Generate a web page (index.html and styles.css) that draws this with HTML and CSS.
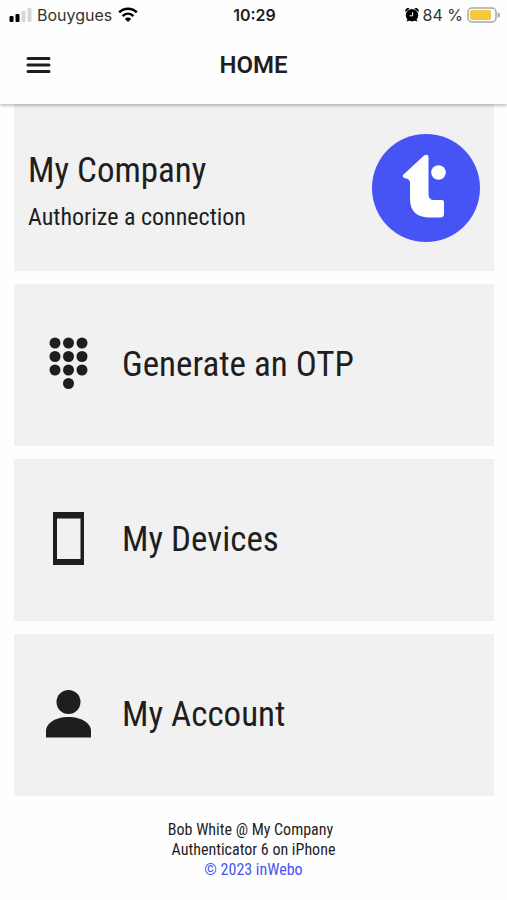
FILE: index.html
```html
<!doctype html>
<html lang="en">
  <head>
    <meta charset="UTF-8" />
    <meta name="viewport" content="width=device-width, initial-scale=1" />
    <title>Home</title>
    <link rel="stylesheet" href="styles.css">
  </head>
  <body>
    <header class="header">
      <div class="status-bar">
        <div class="status-left">
          <svg width="24" height="16" viewBox="0 0 24 16" aria-hidden="true">
            <rect x="0.500" y="9" width="4" height="6" rx="1" />
            <rect x="6.500" y="7" width="4" height="8" rx="1" />
            <rect class="signal-off" x="12.500" y="4" width="4" height="11" rx="1" />
            <rect class="signal-off" x="18.500" y="1" width="4" height="14" rx="1" />
          </svg>
          <span class="carrier">Bouygues</span>
          <svg width="20" height="16" viewBox="0 0 20 16" aria-hidden="true">
            <path class="wifi-arc" d="M1.2 5.4C6.2.6 13.8.6 18.8 5.4M4.6 9C7.8 6 12.2 6 15.4 9" />
            <path d="M10 15 6.8 11.7Q10 9.3 13.2 11.7Z" />
          </svg>
        </div>
        <span class="clock">10:29</span>
        <div class="status-right">
          <svg width="14" height="14" viewBox="0 0 14 14" aria-hidden="true">
            <circle cx="7" cy="7.2" r="6.2" />
            <path d="M.6 4A2.8 2.8 0 0 1 4.6.4ZM13.4 4A2.8 2.8 0 0 0 9.4.4ZM1.4 13.6 3 10.5l2 2ZM12.6 13.6 11 10.5l-2 2Z" />
            <path class="alarm-hands" d="M7.6 4.2v3.6H4.6" />
          </svg>
          <span>84 %</span>
          <svg width="33" height="16" viewBox="0 0 33 16" aria-hidden="true">
            <rect class="battery-case" x="1" y="1" width="28" height="14" rx="4" />
            <rect class="battery-level" x="3" y="3" width="21" height="10" rx="2" />
            <path class="battery-tip" d="M30.5 5.5a2.5 2.5 0 0 1 0 5Z" />
          </svg>
        </div>
      </div>
      <nav class="nav-bar">
        <button type="button" class="menu-button" aria-label="Menu">
          <svg width="26" height="18" viewBox="0 0 26 18" aria-hidden="true">
            <path d="M3 2.500h21M3 9h21M3 15.500h21" />
          </svg>
        </button>
        <h1>HOME</h1>
      </nav>
    </header>

    <main class="cards">
      <button type="button" class="card card-company">
        <span class="company-text">
          <span class="card-title">My Company</span>
          <span class="card-subtitle">Authorize a connection</span>
        </span>
        <svg width="108" height="108" viewBox="0 0 108 108" aria-hidden="true">
          <circle class="logo-disc" cx="54" cy="54" r="54" />
          <path class="logo-mark" d="M52 21.5Q56.500 19 56.500 24V60Q56.500 66 62 66H70Q72 66 72 68V80Q72 83 69 83.500H58Q38 83.500 38 65V49Q38 45 34 44.500Q30 44 31 41Z" />
          <circle class="logo-mark" cx="66.500" cy="38.500" r="7.300" />
        </svg>
      </button>

      <button type="button" class="card">
        <svg class="card-icon" width="54" height="54" viewBox="0 0 54 54" aria-hidden="true">
          <circle cx="14" cy="7" r="5.500" />
          <circle cx="27.500" cy="7" r="5.500" />
          <circle cx="41" cy="7" r="5.500" />
          <circle cx="14" cy="20.500" r="5.500" />
          <circle cx="27.500" cy="20.500" r="5.500" />
          <circle cx="41" cy="20.500" r="5.500" />
          <circle cx="14" cy="34" r="5.500" />
          <circle cx="27.500" cy="34" r="5.500" />
          <circle cx="41" cy="34" r="5.500" />
          <circle cx="27.500" cy="47.500" r="5.500" />
        </svg>
        <span class="card-title">Generate an OTP</span>
      </button>

      <button type="button" class="card">
        <svg class="card-icon" width="54" height="54" viewBox="0 0 54 54" aria-hidden="true">
          <path fill-rule="evenodd" d="M12 1H43V54H12ZM16 7.500V48H39.500V7.500Z" />
        </svg>
        <span class="card-title">My Devices</span>
      </button>

      <button type="button" class="card">
        <svg class="card-icon" width="54" height="54" viewBox="0 0 54 54" aria-hidden="true">
          <circle cx="27.500" cy="16" r="12" />
          <path d="M5 51.500V45C5 37 15 31 27.500 31S50 37 50 45V51.500Z" />
        </svg>
        <span class="card-title">My Account</span>
      </button>
    </main>

    <footer class="footer">
      <p class="footer-user">Bob White @ My Company</p>
      <p>Authenticator 6 on iPhone</p>
      <p><a href="#">© 2023 inWebo</a></p>
    </footer>
  </body>
</html>
```

FILE: styles.css
```css
* {
  box-sizing: border-box;
}
body {
  margin: 0;
  background: #fefefe;
  color: #1e1e1e;
  font-family: "Roboto Condensed", "Liberation Sans Narrow", Roboto, sans-serif;
}
svg {
  display: block;
  flex: none;
}
.header {
  position: relative;
  height: 104px;
  background: #fefefe;
  box-shadow: 0 1px 4px rgba(0, 0, 0, 0.35);
}
.status-bar {
  display: grid;
  grid-template-columns: 1fr auto 1fr;
  align-items: center;
  height: 30px;
  padding: 0 7px 0 9px;
  font-family: Inter, sans-serif;
  font-size: 16px;
  color: #333;
}
.status-left,
.status-right {
  display: flex;
  align-items: center;
  gap: 4px;
}
.status-right {
  justify-content: flex-end;
}
.carrier {
  margin-right: 2px;
}
.clock {
  font-weight: 600;
  color: #1e1e1e;
}
.signal-off {
  fill: #d6d6d6;
}
.wifi-arc {
  fill: none;
  stroke: #000;
  stroke-width: 2.6;
}
.alarm-hands {
  fill: none;
  stroke: #fff;
}
.battery-case {
  fill: none;
  stroke: #a8a8a8;
  stroke-width: 1.5;
}
.battery-level {
  fill: #f5c93b;
}
.battery-tip {
  fill: #a8a8a8;
}
.nav-bar {
  display: grid;
  grid-template-columns: 1fr auto 1fr;
  align-items: center;
  height: 70px;
  padding: 0 20px;
}
.menu-button {
  justify-self: start;
  padding: 5px;
  border: none;
  background: none;
  cursor: pointer;
}
.menu-button path {
  stroke: #1e1e1e;
  stroke-width: 3;
  stroke-linecap: round;
}
h1 {
  margin: 0;
  font-family: Roboto, sans-serif;
  font-size: 24px;
  font-weight: 600;
}
.cards {
  display: flex;
  flex-direction: column;
  gap: 13px;
  padding: 0 13px 0 14px;
}
.card {
  display: flex;
  align-items: center;
  gap: 27px;
  width: 100%;
  min-height: 162px;
  padding: 0 27px;
  border: none;
  background: #f1f1f1;
  color: inherit;
  font-family: inherit;
  text-align: left;
  cursor: pointer;
}
.card-company {
  justify-content: space-between;
  min-height: 167px;
  padding: 0 14px;
}
.company-text {
  display: flex;
  flex-direction: column;
  gap: 8px;
  padding-top: 6px;
}
.card-icon {
  margin-bottom: 4px;
  fill: #1e1e1e;
}
.card-title {
  font-size: 35px;
  line-height: 44px;
}
.card-subtitle {
  font-size: 24px;
  line-height: 32px;
}
.logo-disc {
  fill: #4654f5;
}
.logo-mark {
  fill: #fff;
}
.footer {
  padding: 24px 14px;
  text-align: center;
  font-size: 16px;
  line-height: 20px;
}
.footer p {
  margin: 0;
}
.footer .footer-user {
  padding-right: 6px;
}
.footer a {
  color: #4654f5;
  text-decoration: none;
}
```
